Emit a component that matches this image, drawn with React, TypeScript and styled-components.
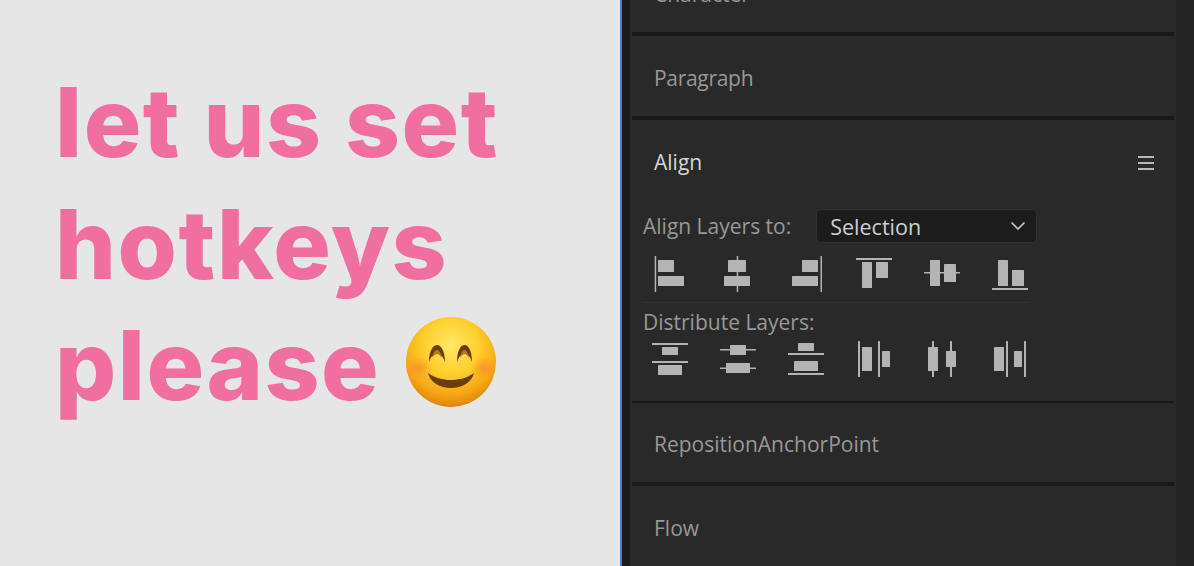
import React from "react";
import styled, { createGlobalStyle } from "styled-components";

const Global = createGlobalStyle`
  html, body { margin: 0; padding: 0; background: #e6e6e6; }
  #root { width: 1194px; height: 566px; overflow: hidden; }
`;

const Page = styled.div`
  display: flex;
  width: 1194px;
  height: 566px;
  overflow: hidden;
`;

const Slide = styled.div`
  width: 620px;
  flex: none;
  box-sizing: border-box;
  background: #e6e6e6;
  padding: 62px 0 0 55px;
`;

const Headline = styled.h1`
  margin: 0;
  font-family: "Inter", "Liberation Sans", Arial, sans-serif;
  font-weight: 800;
  font-size: 96px;
  line-height: 121.5px;
  letter-spacing: 1.5px;
  color: #f06fa0;
`;

const HeadLine = styled.div`
  display: flex;
  align-items: center;
  white-space: nowrap;
`;

const EmojiMark = styled.svg`
  width: 96px;
  height: 96px;
  margin: -8px 0 0 23px;
  flex: none;
`;

const Gutter = styled.div`
  width: 8px;
  flex: none;
  background: #1a1a1a;
  border-left: 2px solid #3f83d6;
`;

const Panel = styled.div`
  width: 546px;
  flex: none;
  display: flex;
  flex-direction: column;
  background: #292929;
  font-family: "Open Sans", "Noto Sans", sans-serif;
`;

const RightStrip = styled.div`
  flex: 1;
  background: #242424;
`;

const Rule = styled.div<{ $h: number }>`
  height: ${(p) => p.$h}px;
  margin: 0 2px;
  background: #191919;
  flex: none;
`;

const Section = styled.div<{ $h: number }>`
  height: ${(p) => p.$h}px;
  flex: none;
  box-sizing: border-box;
  padding: 3px 0 0 24px;
  display: flex;
  align-items: center;
  overflow: hidden;
`;

const ClippedSection = styled(Section)`
  align-items: flex-start;
  padding-top: 0;
`;

const Title = styled.div<{ $active?: boolean; $tight?: boolean }>`
  font-size: 21px;
  line-height: 28px;
  letter-spacing: ${(p) => (p.$tight ? "-0.3px" : "0")};
  color: ${(p) => (p.$active ? "#d6d6d6" : "#989898")};
`;

const ClippedTitle = styled(Title)`
  margin-top: -20px;
`;

const AlignBody = styled.div`
  height: 281px;
  flex: none;
  display: flex;
  flex-direction: column;
  box-sizing: border-box;
`;

const AlignHeader = styled.div`
  height: 84px;
  flex: none;
  display: flex;
  align-items: center;
  justify-content: space-between;
  padding: 0 22px 0 24px;
  box-sizing: border-box;
`;

const MenuIcon = styled.div`
  width: 16px;
  height: 14px;
  margin-top: 2px;
  display: flex;
  flex-direction: column;
  justify-content: space-between;
`;

const MenuBar = styled.span`
  display: block;
  height: 2px;
  background: #b9b9b9;
`;

const LabelRow = styled.div`
  display: flex;
  align-items: center;
  height: 34px;
  margin-top: 5px;
  padding-left: 13px;
  gap: 25px;
  flex: none;
`;

const Label = styled.div`
  font-size: 21px;
  color: #989898;
  white-space: nowrap;
`;

const Select = styled.div`
  width: 221px;
  height: 34px;
  box-sizing: border-box;
  background: #1c1c1c;
  border: 1px solid #303030;
  border-radius: 5px;
  padding: 0 10px 0 13px;
  display: flex;
  align-items: center;
  justify-content: space-between;
  font-size: 21.5px;
  color: #cfcfcf;
`;

const IconRow = styled.div<{ $top: number }>`
  display: flex;
  gap: 28px;
  padding-left: 20px;
  margin-top: ${(p) => p.$top}px;
  flex: none;
`;

const Glyph = styled.svg`
  width: 40px;
  height: 40px;
  flex: none;
  display: block;
`;

const Separator = styled.div`
  height: 1px;
  width: 388px;
  margin: 8px 0 0 12px;
  background: #323232;
  flex: none;
`;

const DistLabel = styled(Label)`
  padding-left: 13px;
  margin-top: 5px;
  line-height: 28px;
`;

type R = [number, number, number, number];

const alignIcons: R[][] = [
  [[4.7, 2, 1.5, 36], [8, 6, 16, 12], [8, 22, 26, 10]],
  [[18.7, 2, 1.5, 36], [10, 6, 18, 12], [6, 22, 26, 10]],
  [[34.5, 2, 1.5, 36], [16, 6, 16, 12], [6, 22, 26, 10]],
  [[2, 4, 36, 2], [8, 8, 10, 26], [22, 8, 12, 16]],
  [[2, 18, 36, 1.5], [8, 6, 10, 26], [22, 10, 12, 18]],
  [[2, 34, 36, 2], [8, 6, 10, 26], [22, 16, 12, 16]],
];

const distIcons: R[][] = [
  [[2, 4, 36, 2], [12, 8, 16, 8], [2, 22, 36, 2], [8, 26, 24, 10]],
  [[2, 10, 36, 1.5], [12, 6, 16, 10], [2, 28.5, 36, 1.5], [8, 24, 24, 10]],
  [[12, 4, 16, 8], [2, 14, 36, 2], [8, 22, 24, 10], [2, 34, 36, 2]],
  [[4, 2, 2, 36], [8, 8, 10, 24], [24, 2, 2, 36], [28, 12, 8, 16]],
  [[10, 2, 2, 36], [6, 8, 10, 24], [28, 2, 2, 36], [24, 12, 10, 16]],
  [[4, 8, 10, 24], [16, 2, 2, 36], [24, 12, 8, 16], [34, 2, 2, 36]],
];

const ToolIcon = ({ rects }: { rects: R[] }) => (
  <Glyph viewBox="0 0 40 40">
    {rects.map(([x, y, w, h], i) => (
      <rect key={i} x={x} y={y} width={w} height={h} fill="#b4b4b4" rx={0.5} />
    ))}
  </Glyph>
);

const Smile = () => (
  <EmojiMark viewBox="0 0 96 96">
    <defs>
      <radialGradient id="face" cx="50%" cy="32%" r="70%">
        <stop offset="0%" stopColor="#ffe868" />
        <stop offset="45%" stopColor="#fdcf2c" />
        <stop offset="78%" stopColor="#f6a514" />
        <stop offset="100%" stopColor="#d97f0a" />
      </radialGradient>
      <radialGradient id="blush" cx="50%" cy="50%" r="50%">
        <stop offset="0%" stopColor="#f98f2c" stopOpacity="0.85" />
        <stop offset="100%" stopColor="#f98f2c" stopOpacity="0" />
      </radialGradient>
    </defs>
    <circle cx="48" cy="48" r="45" fill="url(#face)" />
    <ellipse cx="15" cy="54" rx="13" ry="11" fill="url(#blush)" />
    <ellipse cx="81" cy="54" rx="13" ry="11" fill="url(#blush)" />
    <path d="M26 48c0-11 4-17 8-17s8 6 8 17c-2-6-5-8-8-8s-6 2-8 8z" fill="#6b3d07" />
    <path d="M29 44c1-5 3-8 5-8s4 3 5 8c-1.500-2-3-4-5-4s-3.500 2-5 4z" fill="#b57a1c" />
    <path d="M54 48c0-11 3.500-17 7.500-17s7.500 6 7.500 17c-2-6-4.500-8-7.500-8s-5.500 2-7.500 8z" fill="#6b3d07" />
    <path d="M57 44c1-5 2.500-8 4.500-8s3.500 3 4.500 8c-1.500-2-2.500-4-4.500-4s-3 2-4.500 4z" fill="#b57a1c" />
    <path d="M25 59c7 5 15 7 23 7s16-2 23-7c-2 9-12 15-23 15S27 68 25 59z" fill="#6b3d07" />
  </EmojiMark>
);

export default function App() {
  return (
    <Page>
      <Global />
      <Slide>
        <Headline>
          <HeadLine>let us set</HeadLine>
          <HeadLine>hotkeys</HeadLine>
          <HeadLine>
            please
            <Smile />
          </HeadLine>
        </Headline>
      </Slide>
      <Gutter />
      <Panel>
        <ClippedSection $h={32}>
          <ClippedTitle>Character</ClippedTitle>
        </ClippedSection>
        <Rule $h={4} />
        <Section $h={80}>
          <Title $tight>Paragraph</Title>
        </Section>
        <Rule $h={4} />
        <AlignBody>
          <AlignHeader>
            <Title $active>Align</Title>
            <MenuIcon>
              <MenuBar />
              <MenuBar />
              <MenuBar />
            </MenuIcon>
          </AlignHeader>
          <LabelRow>
            <Label>Align Layers to:</Label>
            <Select>
              Selection
              <svg width="16" height="10" viewBox="0 0 16 10" fill="none">
                <path d="M1.500 1.500L8 8l6.500-6.500" stroke="#c4c4c4" strokeWidth="1.700" />
              </svg>
            </Select>
          </LabelRow>
          <IconRow $top={11}>
            {alignIcons.map((r, i) => (
              <ToolIcon key={i} rects={r} />
            ))}
          </IconRow>
          <Separator />
          <DistLabel>Distribute Layers:</DistLabel>
          <IconRow $top={3}>
            {distIcons.map((r, i) => (
              <ToolIcon key={i} rects={r} />
            ))}
          </IconRow>
        </AlignBody>
        <Rule $h={2} />
        <Section $h={79}>
          <Title>RepositionAnchorPoint</Title>
        </Section>
        <Rule $h={4} />
        <Section $h={80}>
          <Title>Flow</Title>
        </Section>
      </Panel>
      <RightStrip />
    </Page>
  );
}
